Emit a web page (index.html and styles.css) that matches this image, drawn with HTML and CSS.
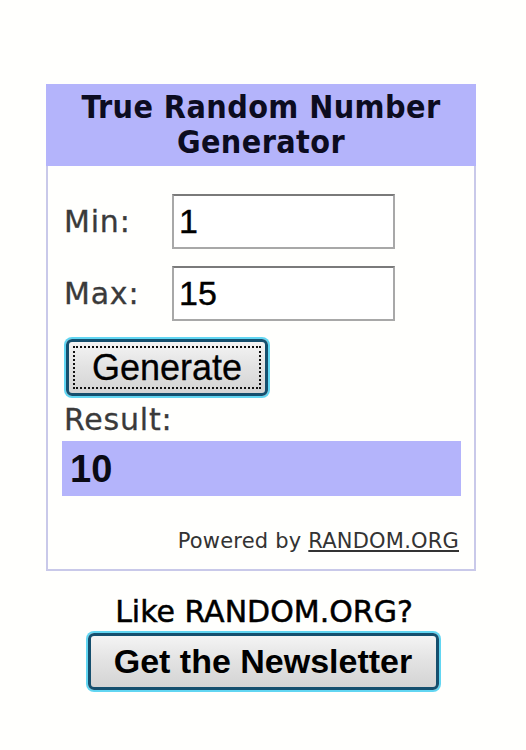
FILE: index.html
```html
<!DOCTYPE html>
<html>
<head>
<meta charset="utf-8">
<link rel="stylesheet" href="styles.css">
</head>
<body>
<div class="page">
  <div class="widget">
    <div class="widget-head">True Random Number<br>Generator</div>
    <div class="widget-body">
      <div class="field-row">
        <span class="label">Min:</span>
        <div class="input">1</div>
      </div>
      <div class="field-row">
        <span class="label">Max:</span>
        <div class="input">15</div>
      </div>
      <div class="btn btn-generate"><span class="focus-ring">Generate</span></div>
      <div class="label result-label">Result:</div>
      <div class="result">10</div>
      <div class="powered">Powered by <span class="link">RANDOM.ORG</span></div>
    </div>
  </div>
  <div class="promo">
    <div class="promo-text">Like RANDOM.ORG?</div>
    <div class="btn btn-news">Get the Newsletter</div>
  </div>
</div>
</body>
</html>
```

FILE: styles.css
```css
html, body {
  margin: 0;
  padding: 0;
  background: #fffffd;
}
.page {
  width: 526px;
  height: 750px;
  padding-top: 84px;
  box-sizing: border-box;
}
.widget {
  margin-left: 46px;
  width: 430px;
  height: 487px;
  box-sizing: border-box;
  border: 2px solid #c9c9e9;
  border-top: none;
  display: flex;
  flex-direction: column;
}
.widget-head {
  height: 82px;
  background: #b4b4fb;
  margin: 0 -2px;
  font-family: "DejaVu Sans Condensed", "DejaVu Sans", sans-serif;
  font-weight: bold;
  font-size: 32px;
  line-height: 35px;
  color: #0c0c20;
  text-align: center;
  padding-top: 6px;
  box-sizing: border-box;
  letter-spacing: 0.4px;
}
.widget-body {
  display: flex;
  flex-direction: column;
  padding: 28px 14px 0 14px;
}
.field-row {
  display: flex;
  align-items: center;
  height: 55px;
  margin-bottom: 17px;
}
.label {
  font-family: "DejaVu Sans", sans-serif;
  font-size: 30px;
  color: #3a3a3a;
  width: 108px;
  padding-left: 2px;
  letter-spacing: 0.8px;
  -webkit-text-stroke: 0.3px #3a3a3a;
}
.input {
  width: 223px;
  height: 55px;
  box-sizing: border-box;
  border: 2px solid #a8a8a8;
  border-top-color: #7a7a7a;
  background: #fff;
  font-family: "Liberation Sans", Arial, sans-serif;
  font-size: 34px;
  line-height: 51px;
  padding-left: 5px;
  color: #000;
  -webkit-text-stroke: 0.4px #000;
}
.btn {
  box-sizing: border-box;
  border: 3px solid #154f6e;
  border-radius: 6px;
  box-shadow: 0 0 0 2px #62d6f2;
  background: linear-gradient(#f4f4f4, #e2e2e2 50%, #d4d4d4);
  font-family: "Liberation Sans", Arial, sans-serif;
  color: #000;
  display: flex;
  align-items: center;
  justify-content: center;
}
.btn-generate {
  width: 202px;
  height: 57px;
  margin-left: 4px;
  margin-top: 1px;
  font-size: 36px;
  padding: 4px;
}
.focus-ring {
  flex: 1;
  align-self: stretch;
  border: 2px dotted #111;
  display: flex;
  align-items: center;
  justify-content: center;
  -webkit-text-stroke: 0.3px #000;
}
.result-label {
  width: auto;
  padding-left: 2px;
  margin-top: 7px;
  height: 38px;
  line-height: 34px;
}
.result {
  width: 399px;
  height: 55px;
  background: #b4b4fb;
  font-family: "Liberation Sans", Arial, sans-serif;
  font-size: 38px;
  font-weight: bold;
  line-height: 57px;
  padding-left: 8px;
  box-sizing: border-box;
  color: #0a0a14;
}
.powered {
  margin-top: 33px;
  align-self: flex-end;
  margin-right: 1px;
  font-family: "DejaVu Sans", sans-serif;
  font-size: 21px;
  letter-spacing: 0.2px;
  color: #333;
}
.link {
  text-decoration: underline;
}
.promo {
  display: flex;
  flex-direction: column;
  align-items: center;
  padding-top: 23px;
}
.promo-text {
  font-family: "DejaVu Sans", sans-serif;
  font-size: 30px;
  line-height: 35px;
  color: #000;
  margin-left: 2px;
  -webkit-text-stroke: 0.5px #000;
}
.btn-news {
  margin-top: 4px;
  width: 351px;
  height: 57px;
  font-size: 34px;
  font-weight: bold;
}
```
